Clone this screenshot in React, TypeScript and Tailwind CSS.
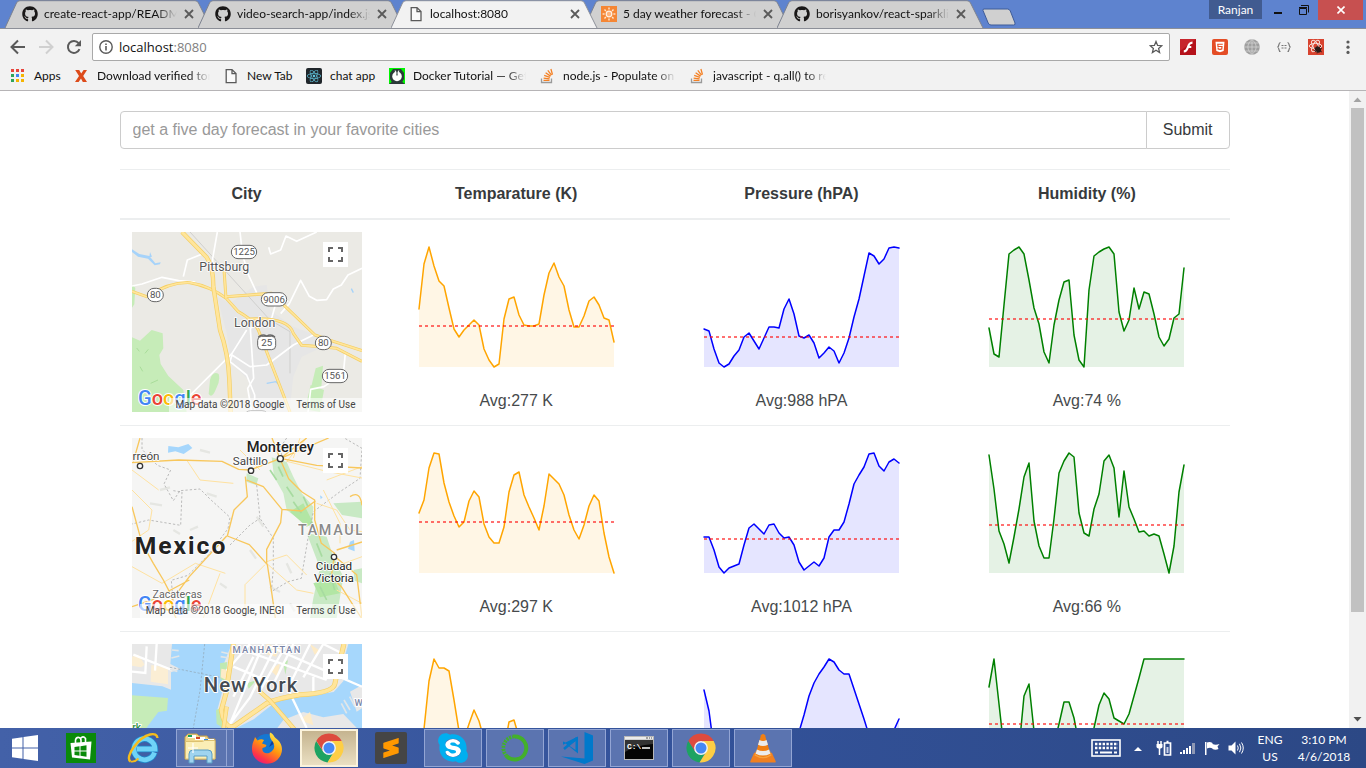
import React from "react";
import { FaGithub, FaHtml5, FaReact, FaSkype } from "react-icons/fa";
import { SiSublimetext } from "react-icons/si";

/* ---------- Browser icons ---------- */

function PageIcon() {
  return (
    <svg className="h-4 w-4" viewBox="0 0 16 16" fill="none" stroke="#5a5a5a" strokeWidth="1.3" aria-hidden="true">
      <path d="M3.2 1.6H9l4 4v9H3.2zM9 1.6v4h4" fill="#fafafa" />
    </svg>
  );
}

function SunIcon() {
  const rays = [0, 45, 90, 135, 180, 225, 270, 315];
  return (
    <svg className="h-4 w-4" viewBox="0 0 16 16" aria-hidden="true">
      <rect width="16" height="16" fill="#f58634" />
      <circle cx="8" cy="8" r="2.8" fill="#ffb27a" stroke="#fff1e2" strokeWidth="1.2" />
      {rays.map((r) => (
        <path key={r} d="M8 1.6v2" stroke="#ffe6cf" strokeWidth="1.4" transform={`rotate(${r} 8 8)`} />
      ))}
    </svg>
  );
}

function CloseIcon() {
  return (
    <svg className="h-2.5 w-2.5" viewBox="0 0 10 10" stroke="#5a5a5a" strokeWidth="1.8" aria-hidden="true">
      <path d="M1 1l8 8M9 1L1 9" />
    </svg>
  );
}

function StackIcon() {
  return (
    <svg className="h-4 w-4" viewBox="0 0 16 16" fill="none" aria-hidden="true">
      <path d="M2.5 10.5v4h10v-4" stroke="#9a9a9a" strokeWidth="1.3" />
      <g stroke="#f48024" strokeWidth="1.3">
        <path d="M4.5 12.4h6M4.6 10.1l6 .8M5.2 7.4l5.7 2M6.6 4.7l5 3.4M8.8 2.4l3.7 4.8M11.9 1l1.6 5.6" />
      </g>
    </svg>
  );
}

function DockerIcon() {
  return (
    <svg className="h-4 w-4" viewBox="0 0 16 16" aria-hidden="true">
      <rect width="16" height="16" fill="#00f500" />
      <path d="M4 1h8l3 4v6l-3 5H4l-3-5V5z" fill="#2c3a3a" />
      <circle cx="8" cy="8.4" r="4.8" fill="#fff" />
      <path d="M8 2v5.500" stroke="#2c3a3a" strokeWidth="1.2" />
      <path d="M6.200 2.500l.6 3M9.800 2.500l-.6 3" stroke="#fff" strokeWidth="1" />
      <path d="M0 16l4-3v3zM16 16l-4-3v3z" fill="#2c3a3a" />
    </svg>
  );
}

function AppsIcon() {
  const colors = ["#e8453c", "#e8453c", "#e8453c", "#2fa45b", "#4285f4", "#f5b400", "#2fa45b", "#f5b400", "#f5b400"];
  return (
    <svg className="h-4 w-4" viewBox="0 0 16 16" aria-hidden="true">
      {colors.map((c, i) => (
        <rect key={i} x={1 + (i % 3) * 5} y={1 + Math.floor(i / 3) * 5} width="3" height="3" fill={c} />
      ))}
    </svg>
  );
}

function XIcon() {
  return (
    <svg className="h-4 w-4" viewBox="0 0 16 16" aria-hidden="true">
      <path d="M2.2 2h4l2 3.4L10.6 2H14l-3.8 6L14 14h-4.2L8 10.6 5.6 14H2l4-6z" fill="#dd4b1a" />
    </svg>
  );
}

function ReactBadge() {
  return (
    <span className="flex h-4 w-4 items-center justify-center rounded-xs bg-[#20262b] text-[#61c7e0]">
      <FaReact className="h-3.5 w-3.5" aria-hidden="true" />
    </span>
  );
}

/* ---------- Browser chrome ---------- */

type TabInfo = { title: string; icon: React.ReactNode; active?: boolean };

const githubIcon = <FaGithub className="h-4 w-4 text-[#191717]" aria-hidden="true" />;

const tabs: TabInfo[] = [
  { title: "create-react-app/README", icon: githubIcon },
  { title: "video-search-app/index.js", icon: githubIcon },
  { title: "localhost:8080", icon: <PageIcon />, active: true },
  { title: "5 day weather forecast - O", icon: <SunIcon /> },
  { title: "borisyankov/react-sparkli", icon: githubIcon },
];

function Tab({ title, icon, active }: TabInfo) {
  return (
    <div className={`relative -mr-3.5 flex h-7 w-[207px] shrink-0 items-center pl-[17px] pr-[18px] ${active ? "z-10" : ""}`}>
      <svg className="absolute inset-0 h-full w-full" viewBox="0 0 207 28" preserveAspectRatio="none" aria-hidden="true">
        <path
          d="M0 28L11.5 3Q12.5 .7 15 .7H190Q192.500 .7 193.500 3L206 28"
          fill={active ? "#f2f2f2" : "#d0d0d0"}
          stroke={active ? "#8d9099" : "#7d828f"}
        />
      </svg>
      <span className="relative shrink-0">{icon}</span>
      <span className="relative ml-1.5 w-[133px] shrink-0 overflow-hidden whitespace-nowrap text-[#111] [mask-image:linear-gradient(to_right,black_84%,transparent)]">
        {title}
      </span>
      <button type="button" aria-label={`Close ${title}`} className="relative ml-[7px]">
        <CloseIcon />
      </button>
    </div>
  );
}

function TabStrip() {
  return (
    <header className="flex h-[29px] shrink-0 items-start justify-between border-b border-[#8c8f98] bg-[#5e83cf]">
      <div className="flex pl-[5px]">
        {tabs.map((t) => (
          <Tab key={t.title} {...t} />
        ))}
        <button type="button" aria-label="New tab" className="ml-3 pt-1.5">
          <svg className="h-[18px] w-[34px]" viewBox="0 0 34 18" aria-hidden="true">
            <path d="M2 1h23.500q2 0 2.800 2l4.700 12q.6 2-1.500 2H9q-2 0-2.800-2L1 2.500Q.7 1 2 1z" fill="#d0d0d0" stroke="#3f5c98" />
          </svg>
        </button>
      </div>
      <div className="flex items-start pr-[3px]">
        <button type="button" className="mr-2 h-[19px] w-[53px] bg-[#415b90] leading-4 text-white">Ranjan</button>
        <button type="button" aria-label="Minimize" className="flex h-5 w-6 items-center pl-1">
          <svg className="h-3 w-2" viewBox="0 0 8 12" aria-hidden="true"><path d="M0 9h8" stroke="#111" strokeWidth="2" /></svg>
        </button>
        <button type="button" aria-label="Restore" className="flex h-5 w-6 items-center pl-1">
          <svg className="h-3 w-3" viewBox="0 0 12 12" fill="none" stroke="#111" aria-hidden="true">
            <path d="M1.500 4.500h7v6h-7zM1 3.500h8M3 1.500h7.500v7" />
          </svg>
        </button>
        <button type="button" aria-label="Close" className="flex h-5 w-[45px] items-center justify-center bg-[#c75050]">
          <svg className="h-2 w-2" viewBox="0 0 8 8" stroke="#fff" strokeWidth="1.6" aria-hidden="true"><path d="M.500 .500l7 7M7.500 .500l-7 7" /></svg>
        </button>
      </div>
    </header>
  );
}

function Toolbar() {
  return (
    <div className="flex h-[35px] shrink-0 items-center bg-[#f2f2f2] px-2.5 pt-1">
      <div className="-mt-1 flex items-center gap-3">
        <button type="button" aria-label="Back">
          <svg className="h-4 w-4" viewBox="0 0 16 16" fill="none" stroke="#5a5a5a" strokeWidth="2" aria-hidden="true"><path d="M15 8H2M8 1.500L1.500 8 8 14.500" /></svg>
        </button>
        <button type="button" aria-label="Forward">
          <svg className="h-4 w-4" viewBox="0 0 16 16" fill="none" stroke="#d0d0d0" strokeWidth="2" aria-hidden="true"><path d="M1 8h13M8 1.500L14.500 8 8 14.500" /></svg>
        </button>
        <button type="button" aria-label="Reload">
          <svg className="h-4 w-4" viewBox="0 0 16 16" fill="none" aria-hidden="true">
            <path d="M13.500 10.200A6 6 0 1 1 12.600 4.100" stroke="#5a5a5a" strokeWidth="2" />
            <path d="M15 1v6.200H8.800z" fill="#5a5a5a" />
          </svg>
        </button>
      </div>
      <div className="-mt-1 ml-2.5 flex h-7 min-w-0 flex-1 items-center rounded-xs border border-[#a9a9a9] bg-white px-1.5">
        <svg className="h-3.5 w-3.5" viewBox="0 0 14 14" fill="none" stroke="#5a5a5a" aria-hidden="true">
          <circle cx="7" cy="7" r="6.200" strokeWidth="1.400" />
          <path d="M7 6v4.500M7 3.400v1.500" strokeWidth="1.600" />
        </svg>
        <div className="ml-1.5 min-w-0 flex-1 font-['Open_Sans',sans-serif] text-[13px] leading-5 text-[#111]">
          localhost<span className="text-[#808080]">:8080</span>
        </div>
        <button type="button" aria-label="Bookmark this page">
          <svg className="h-3.5 w-3.5" viewBox="0 0 14 14" fill="none" stroke="#5a5a5a" strokeWidth="1.300" aria-hidden="true">
            <path d="M7 1.500l1.600 3.900 4.200.3-3.200 2.700 1 4.100L7 10.300l-3.600 2.200 1-4.100L1.200 5.700l4.200-.3z" />
          </svg>
        </button>
      </div>
      <div className="-mt-1 ml-2.5 flex items-center gap-4">
        <svg className="h-4 w-4" viewBox="0 0 16 16" role="img" aria-label="Flash">
          <rect width="16" height="16" fill="#b5121b" /><path d="M0 0h16L0 12z" fill="#d4343b" opacity=".6" />
          <path d="M12.500 2.500v2.300c-1.600 0-2.300.7-2.900 2.100h1.700V9H8.800c-1 2.700-2.300 4.500-5 4.500v-2.300c1.700 0 2.300-1.200 3.300-3.900.9-2.600 2.300-4.800 5.400-4.800z" fill="#fff" />
        </svg>
        <span className="flex h-4 w-4 items-center justify-center rounded-xs bg-[#e44d26] text-white"><FaHtml5 className="h-3 w-3" aria-hidden="true" /></span>
        <svg className="h-4 w-4" viewBox="0 0 16 16" role="img" aria-label="Globe">
          <circle cx="8" cy="8" r="7.800" fill="#9f9f9f" />
          <path d="M8 0v16M0 8h16M1.500 4h13M1.500 12h13M8 .5C2.500 5 2.500 11 8 15.500M8 .5c5.500 4.500 5.500 10.500 0 15" fill="none" stroke="#d2d2d2" strokeWidth=".8" />
        </svg>
        <svg className="h-4 w-4" viewBox="0 0 16 16" fill="none" stroke="#777" role="img" aria-label="JSON">
          <path d="M4.500 3.500C2 3.500 3.800 7.500 1.500 8c2.300.5.5 4.500 3 4.500M11.500 3.500c2.500 0 .7 4 3 4.500-2.300.5-.5 4.500-3 4.500" strokeWidth="1.200" />
          <path d="M5.500 6.500h2M8.500 6.500h2M5.500 9h2M8.500 9h2" strokeWidth="1.200" />
        </svg>
        <svg className="h-4 w-4" viewBox="0 0 16 16" fill="none" role="img" aria-label="React">
          <rect width="16" height="16" fill="#d8432f" />
          <g stroke="#f7dcd6" strokeWidth="1"><ellipse cx="7.500" cy="7" rx="6.300" ry="2.600" /><ellipse cx="7.500" cy="7" rx="6.300" ry="2.600" transform="rotate(60 7.500 7)" /><ellipse cx="7.500" cy="7" rx="6.300" ry="2.600" transform="rotate(120 7.500 7)" /></g>
          <ellipse cx="10" cy="10.500" rx="2.600" ry="3.400" fill="#2b1a18" transform="rotate(-40 10 10.500)" />
          <path d="M6 9l8 4M7 13l6-6M9 14.500l1-8M6 11.500l8-2" stroke="#2b1a18" strokeWidth=".8" />
        </svg>
        <button type="button" aria-label="Menu">
          <svg className="h-4 w-4" viewBox="0 0 16 16" fill="#5a5a5a" aria-hidden="true"><circle cx="8" cy="3" r="1.600" /><circle cx="8" cy="8.200" r="1.600" /><circle cx="8" cy="13.400" r="1.600" /></svg>
        </button>
      </div>
    </div>
  );
}

const FADE = "w-[113px] overflow-hidden [mask-image:linear-gradient(to_right,black_82%,transparent)]";

const bookmarks = [
  { label: "Apps", icon: <AppsIcon />, width: "w-[26px]" },
  { label: "Download verified torr", icon: <XIcon />, width: FADE },
  { label: "New Tab", icon: <PageIcon />, width: "w-[46px]" },
  { label: "chat app", icon: <ReactBadge />, width: "w-[46px]" },
  { label: "Docker Tutorial — Get", icon: <DockerIcon />, width: FADE },
  { label: "node.js - Populate on", icon: <StackIcon />, width: FADE },
  { label: "javascript - q.all() to re", icon: <StackIcon />, width: FADE },
];

function BookmarksBar() {
  return (
    <nav aria-label="Bookmarks" className="flex h-[27px] shrink-0 items-start gap-[13px] border-b border-[#b6b4b6] bg-[#f2f2f2] pl-2.5 pt-1">
      {bookmarks.map((b) => (
        <a key={b.label} href="#" className="flex items-center gap-2 text-[#111]">
          {b.icon}
          <span className={`whitespace-nowrap leading-4 ${b.width}`}>{b.label}</span>
        </a>
      ))}
    </nav>
  );
}

/* ---------- Maps ---------- */

type Shield = { x: number; y: number; w: number; text: string };

function Road({ d, width = 9 }: { d: string; width?: number }) {
  return (
    <g fill="none" strokeLinejoin="round">
      <path d={d} stroke="#f5cf62" strokeWidth={width} />
      <path d={d} stroke="#ffe59b" strokeWidth={width - 4} />
    </g>
  );
}

const shields: Shield[] = [
  { x: 372, y: 96, w: 76, text: "1225" },
  { x: 106, y: 225, w: 48, text: "80" },
  { x: 462, y: 238, w: 76, text: "9006" },
  { x: 440, y: 369, w: 54, text: "25" },
  { x: 610, y: 369, w: 48, text: "80" },
  { x: 645, y: 468, w: 76, text: "1561" },
];

function LondonMap() {
  return (
    <svg className="block h-full w-full" viewBox="36 36 690 540" preserveAspectRatio="xMidYMid slice" role="img" aria-label="Map of London, Kentucky">
      <rect x="36" y="36" width="690" height="540" fill="#ebeae5" />
      <path d="M292 230L330 250 400 200 440 195 450 270 520 320 600 350 610 380 545 410 520 470 508 576H400L385 480 335 430 320 340z" fill="#e6e6e6" />
      <path d="M36 352L60 362 95 330 128 340 130 385 118 405 122 432 145 468 190 510 200 576H36zM36 195l10 8-3 50-7 10z" fill="#c6ecb8" />
      <path d="M270 480q8-28 26-18 6 20-8 45-12 30-22 15zM575 495l12-50 22-8-5 65-25 10zM572 495l40 15-12 66-45-8z" fill="#c6ecb8" />
      <path d="M75 400l10-12M92 490l22-10M60 440l8 14M160 545l20-8M50 384l8 10M110 520l14 8" fill="none" stroke="#a9dd9a" strokeWidth="3" />
      <path d="M36 88L58 102 88 108 106 130 122 127 120 133 104 136 84 116 54 110 36 96zM90 96l6 14-8 2z" fill="#a6d3fa" />
      <path d="M440 490l28-5 10 10M694 206l6 12" fill="none" stroke="#a6d3fa" strokeWidth="4" />
      <path d="M210 36L450 300 510 335V460" fill="none" stroke="#cfcfcd" strokeWidth="3" />
      <g fill="none" stroke="#fff" strokeWidth="5" strokeLinejoin="round">
        <path d="M36 198l30-6 60-20 50 10 50 4M190 170l12-50 45-18" />
        <path d="M292 36l-14 80 4 120" />
        <path d="M360 36l8 70 18 60 24 52M590 36l-60 28-32-16-16 42-30 12-6-20" />
        <path d="M726 145l-42 20-20 30-24 12-20 32-30 2-22-12-26-48-34 70-26 30" />
        <path d="M455 295l10-36 40-16M455 295l-64 30 4 60 6 90-18 30 12 71M380 330l-44 70-60 60-80 80" />
        <path d="M580 345l-60 30-80 60-50 5-54-35-6 20 50 40 24 60 0 50" />
        <path d="M676 400l-6 60-58 40-40 8-8 68" />
      </g>
      <Road d="M36 214L80 230Q150 185 210 188Q270 198 320 236L355 275Q400 300 415 330L440 395 510 576" />
      <Road d="M318 236L312 148M318 230L455 220 585 345 640 364 726 392" />
      <Road d="M390 297Q505 290 520 340L545 376Q610 380 650 385L726 424" />
      <Road d="M186 36L260 112Q280 140 280 200L300 330Q325 400 328 480L332 576" width={13} />
      <g fontFamily="Roboto, sans-serif" textAnchor="middle" fill="#555">
        <g fontSize="37" stroke="#fff" strokeWidth="5" strokeLinejoin="round" paintOrder="stroke">
          <text x="313" y="154">Pittsburg</text>
          <text x="404" y="321">London</text>
        </g>
        {shields.map((s) => (
          <g key={`${s.text}-${s.x}`} fontSize="29">
            <rect x={s.x - s.w / 2} y={s.y - 20} width={s.w} height="40" rx={s.text === "25" ? 12 : 20} fill="#fff" stroke="#666" strokeWidth="3" />
            <text x={s.x} y={s.y + 10}>{s.text}</text>
          </g>
        ))}
        <path d="M415 351q12-10 25-3 13-7 25 3" fill="none" stroke="#666" strokeWidth="4" />
        <rect x="372" y="572" width="74" height="40" rx="20" fill="#fff" stroke="#666" strokeWidth="3" />
      </g>
    </svg>
  );
}

function MexicoMap() {
  return (
    <svg className="block h-full w-full" viewBox="36 24 690 540" preserveAspectRatio="xMidYMid slice" role="img" aria-label="Map of northern Mexico">
      <rect x="36" y="24" width="690" height="540" fill="#f5f5f4" />
      <path d="M455 82L500 96 520 140 545 190 580 230 575 290 540 270 500 240 490 190 462 140z" fill="#cdebc8" />
      <path d="M560 310l60 10 20 60 30 60-20 124h-80l10-60 20-90zM640 220l86-5v50l-60-10zM700 420l26-5v45l-22-8zM380 130l35 15-6 20-30-10zM480 100l30 25-15 15-22-20z" fill="#c8e9c4" />
      <path d="M510 245l40-25 30 60-20 10zM580 460l60-20 20 50-60 12z" fill="#b2e6a4" />
      <path d="M475 110l14 30M500 170l20 30M520 215l24 34M590 340l16 40M600 470l20 40M630 430l14 50M470 150l-20-30M550 200l14 30" fill="none" stroke="#a7dba0" strokeWidth="5" />
      <path d="M120 180l30-8M90 220l36 6M210 300l24-10M260 190l30 10M300 460l20 14M410 260l20 30M450 470l30 16M500 400l14 30M240 60l30 8M160 300l20 12M390 360l18 26M510 520l14 24" fill="none" stroke="#e5e6e2" strokeWidth="7" />
      <path d="M145 48l30 4 30-10 12 12-26 18-25-8-22 4zM690 335l12-5 2 34-20-8zM600 196l8 6-6 6z" fill="#a5d6fc" />
      <g fill="none" stroke="#9d9d9d" strokeWidth="2" strokeDasharray="7 6">
        <path d="M66 24v34l46 48 40 14-20 42 28 50 20-30 60-5 30 30 60 55-6 34-60 80-60 60-50 15 6 70" />
        <path d="M160 182l26 4-4 100-96-16-50 12M410 165l10 100 40 60v90l-6 70 50-30 40-10 20-120 16-80 80-60 60-40 6-90-60-35" />
        <path d="M500 24l-20 30 10 40M330 345l60-60 30-20" />
      </g>
      <g fill="none" stroke="#ffe2a0" strokeWidth="3">
        <path d="M36 180l60 60-10 60-50 34M200 90l40 60 100 10M36 410l90 50 100-60 90 30M375 564v-100l60-60M440 395l60-20 60 60M540 24l-20 60M560 24l-60 70 120 30 106 20M590 220l60 20 40 60 36 5M660 340v-60l-50-100M645 410l81-30M440 400l90 80 50 10M650 480l76 40M36 120l80 60M420 120l-60-60M620 150l106-40M300 430l-50 134" />
      </g>
      <g fill="none" stroke="#f8c75c" strokeWidth="4" strokeLinejoin="round">
        <path d="M36 98l140-8 130 4 50 24 34 2 90-34 26 60 40 40 38 24v60l20 70 40 30-10 70 30 30 60 94" />
        <path d="M480 86l80-62M480 86l146-62M485 86l105 20 136 8M480 86l-24-62" />
        <path d="M376 140l6 60-40 40-20 78 66 26 54 60 14 90 10 70M380 150l50 20 56 68-4 40-42 80v44M485 238l60 5 41-30" />
        <path d="M320 318L208 440l-60 80 20 44M36 230l30 110 34 60 30 50 26 50M36 530l60-20 112-60M650 360l76-24M650 384l60 50 16 130M690 200q30-20 36 26M60 24l-20 70" />
      </g>
      <g fontFamily="Roboto, sans-serif" textAnchor="middle" stroke="#fff" strokeWidth="5" strokeLinejoin="round" paintOrder="stroke" fill="#222">
        <g fill="#fff" stroke="#333" strokeWidth="4" paintOrder="normal">
          <circle cx="60" cy="108" r="8" /><circle cx="393" cy="122" r="8" /><circle cx="481" cy="86" r="9" /><circle cx="642" cy="381" r="8" />
        </g>
        <text x="481" y="67" fontSize="44" fontWeight="500">Monterrey</text>
        <text x="391" y="104" fontSize="35" fill="#444">Saltillo</text>
        <text x="78" y="89" fontSize="35" fill="#444">rreón</text>
        <text x="183" y="373" fontSize="74" fontWeight="700" letterSpacing="6">Mexico</text>
        <text x="634" y="315" fontSize="43" fontWeight="500" fill="#8a8a8a" letterSpacing="5">TAMAUL</text>
        <text x="642" y="419" fontSize="35">Ciudad</text>
        <text x="642" y="455" fontSize="35">Victoria</text>
        <text x="172" y="504" fontSize="32" fill="#666">Zacatecas</text>
      </g>
    </svg>
  );
}

function NewYorkMap() {
  return (
    <svg className="block h-full w-full" viewBox="36 42 690 540" preserveAspectRatio="xMidYMid slice" role="img" aria-label="Map of New York">
      <rect x="36" y="42" width="690" height="540" fill="#a6d7fc" />
      <path d="M36 42h120l-5 60 30 15-28 10v52l-26-10-91-10z" fill="#e8e8e8" />
      <path d="M94 105l50 8v50l-52-8zM36 80l20-6 18 30-10 8-28-5z" fill="#fbeed4" />
      <path d="M36 196l108 8-3 38-26 4-36 48H36z" fill="#c6ecb8" />
      <path d="M335 42h350l-20 70 6 40-30 34-170 26-70 56-60 30-40-10-10-44 16-60-2-66z" fill="#e8e8e8" />
      <path d="M300 100l22-4-6 60-15-10zM288 240l18-8v60l-16-10zM380 160l30-10-24 26zM490 100l14-10-8 44z" fill="#bfe9b2" />
      <path d="M460 310l30-40 60-24 60 16 60-10 56 58v280H420zM690 185l36-20v70l-16 10z" fill="#e8e8e8" />
      <path d="M304 116l22 4-8 30-16-8zM440 42l40 8-12 30-38-10zM450 120l30-20-8 40zM570 42l30 20-16 12zM540 270l30-24 10 40z" fill="#fdebc7" />
      <g fill="none" stroke="#fff" strokeWidth="7">
        <path d="M40 74l116 46M36 125l40 4 4-80M110 42l-5 80M430 42l-100 240M470 42l-80 160-60 80M500 42l-80 140M390 42l-70 80M340 110l120 50M370 60l250 90M520 42l-60 120M570 42l-60 120M610 42l-60 100M450 50l276 120M400 80l-60 120M510 190l50 104M580 140v50M610 42l60 30" />
      </g>
      <path d="M254 42l-14 140-20 112M150 112l150 30" fill="none" stroke="#91a4b2" strokeWidth="2" strokeDasharray="7 5" />
      <g fill="none" stroke="#e1e6e8" strokeWidth="5"><path d="M154 84l24-6M150 118l22 6M156 60l20 2M304 66l26 6M302 80l26 4M680 250l-16-30M690 240l-18-30M705 230l-16-30" /></g>
      <Road d="M340 42L318 190 304 240Q312 294 340 290L440 220Q470 205 540 194Q640 190 645 160Q655 110 672 42" width={15} />
      <Road d="M414 180L450 212 520 294 560 340" width={13} />
      <Road d="M320 230l-10 70" width={13} />
      <g fontFamily="Roboto, sans-serif" textAnchor="middle" stroke="#fff" strokeWidth="6" strokeLinejoin="round" paintOrder="stroke">
        <text x="441" y="69" fontSize="28" fontWeight="500" fill="#7a86a8" letterSpacing="4">MANHATTAN</text>
        <text x="393" y="185" fontSize="61" fontWeight="500" fill="#444b52" letterSpacing="3">New York</text>
        <text x="716" y="227" fontSize="28" fontWeight="500" fill="#7a86a8">W</text>
        <text x="50" y="302" fontSize="30" fontWeight="500" fill="#2f8f45">rk</text>
      </g>
    </svg>
  );
}

function GoogleMark() {
  return (
    <svg className="absolute bottom-0 left-1.5 h-6 w-[66px]" viewBox="0 0 66 24" role="img" aria-label="Google">
      <text x="0" y="17" fontFamily="Roboto, sans-serif" fontSize="20" fontWeight="500" stroke="#fff" strokeWidth="2" strokeLinejoin="round" paintOrder="stroke">
        <tspan fill="#4285f4">G</tspan><tspan fill="#ea4335">o</tspan><tspan fill="#fbbc05">o</tspan><tspan fill="#4285f4">g</tspan><tspan fill="#34a853">l</tspan><tspan fill="#ea4335">e</tspan>
      </text>
    </svg>
  );
}

function MapPanel({ children, credit }: { children: React.ReactNode; credit: string }) {
  return (
    <div className="relative h-[180px] w-full overflow-hidden">
      {children}
      <GoogleMark />
      <div className="absolute bottom-0 right-0 flex gap-3 bg-white/60 px-1.5 font-[Roboto,sans-serif] text-[10px] leading-[14px] text-[#444]">
        <span>{credit}</span>
        <a href="#">Terms of Use</a>
      </div>
      <button type="button" aria-label="Toggle fullscreen view" className="absolute right-3.5 top-2.5 flex h-[25px] w-[25px] items-center justify-center bg-white">
        <svg className="h-[15px] w-[15px]" viewBox="0 0 15 15" fill="none" stroke="#666" strokeWidth="2" aria-hidden="true">
          <path d="M1 5V1h4M10 1h4v4M14 10v4h-4M5 14H1v-4" />
        </svg>
      </button>
    </div>
  );
}

/* ---------- Forecast table ---------- */

type Series = { points: number[]; mean: number; avg: string };

type City = { name: string; credit: string; map: React.ReactNode; series: Series[] };

const COLORS = ["orange", "blue", "green"];

/* Points are distances from the top of the 120px plot, one every 5px. */
const cities: City[] = [
  {
    name: "London",
    credit: "Map data ©2018 Google",
    map: <LondonMap />,
    series: [
      { avg: "277 K", mean: 79, points: [62, 17, 0, 19, 34, 39, 61, 82, 90, 83, 78, 73, 78, 102, 113, 120, 117, 72, 52, 50, 68, 78, 79, 79, 77, 48, 26, 16, 30, 39, 63, 80, 80, 69, 54, 50, 58, 71, 73, 95] },
      { avg: "988 hPA", mean: 90, points: [82, 84, 102, 116, 120, 117, 109, 103, 90, 86, 94, 102, 91, 80, 80, 81, 62, 52, 67, 89, 91, 88, 96, 111, 106, 100, 104, 116, 106, 91, 70, 52, 29, 6, 9, 17, 12, 1, 0, 1] },
      { avg: "74 %", mean: 72, points: [81, 107, 110, 58, 7, 3, 0, 7, 33, 61, 77, 105, 116, 78, 53, 35, 33, 88, 113, 120, 43, 9, 5, 2, 0, 7, 65, 84, 73, 41, 62, 45, 47, 67, 90, 99, 92, 71, 67, 21] },
    ],
  },
  {
    name: "Mexico",
    credit: "Map data ©2018 Google, INEGI",
    map: <MexicoMap />,
    series: [
      { avg: "297 K", mean: 69, points: [60, 47, 15, 0, 1, 30, 49, 63, 74, 69, 48, 38, 44, 71, 84, 90, 90, 74, 39, 22, 19, 42, 54, 65, 77, 53, 21, 26, 31, 42, 62, 77, 86, 72, 53, 42, 48, 80, 104, 120] },
      { avg: "1012 hPA", mean: 86, points: [84, 84, 97, 114, 120, 115, 113, 111, 92, 75, 71, 76, 81, 72, 71, 80, 85, 84, 92, 109, 117, 113, 109, 113, 105, 84, 77, 77, 69, 51, 31, 22, 14, 1, 0, 13, 18, 9, 6, 10] },
      { avg: "66 %", mean: 72, points: [2, 36, 78, 91, 110, 84, 56, 24, 10, 68, 93, 105, 105, 66, 20, 8, 0, 4, 60, 80, 83, 56, 41, 8, 2, 15, 64, 18, 54, 66, 79, 78, 83, 81, 83, 101, 120, 93, 39, 12] },
    ],
  },
  {
    name: "New York",
    credit: "Map data ©2018 Google",
    map: <NewYorkMap />,
    series: [
      { avg: "278 K", mean: 76, points: [110, 70, 22, 0, 9, 9, 12, 41, 72, 80, 65, 51, 62, 80, 95, 105, 110, 90, 63, 61, 78, 90, 100, 108, 112, 108, 98, 90, 86, 92, 104, 112, 118, 120, 108, 96, 90, 94, 104, 112] },
      { avg: "1018 hPA", mean: 80, points: [31, 52, 90, 105, 115, 120, 118, 112, 110, 108, 105, 104, 108, 110, 108, 105, 100, 92, 84, 73, 56, 37, 24, 15, 8, 0, 3, 11, 15, 15, 30, 45, 60, 76, 88, 95, 92, 82, 71, 60] },
      { avg: "79 %", mean: 65, points: [28, 0, 45, 90, 110, 115, 90, 37, 25, 72, 95, 110, 105, 85, 65, 43, 43, 59, 85, 100, 95, 69, 46, 34, 40, 59, 62, 65, 55, 37, 19, 0, 0, 0, 0, 0, 0, 0, 0, 0] },
    ],
  },
];

function Sparkline({ points, mean, color }: { points: number[]; mean: number; color: string }) {
  const line = points.map((y, i) => `${i * 5},${y}`).join(" ");
  return (
    <svg className="mx-auto block h-[157px] w-[199px]" viewBox="-2 -15 199 157" aria-hidden="true">
      <polygon points={`0,120 ${line} 195,120`} fill={color} fillOpacity=".1" />
      <polyline points={line} fill="none" stroke={color} strokeWidth="1.5" strokeLinejoin="round" strokeLinecap="round" />
      <path d={`M0 ${mean}h195`} stroke="red" strokeOpacity=".75" strokeWidth="1.5" strokeDasharray="3 3" />
    </svg>
  );
}

function ForecastTable() {
  return (
    <table className="mt-5 w-full table-fixed border-separate border-spacing-0 text-center">
      <thead>
        <tr>
          {["City", "Temparature (K)", "Pressure (hPA)", "Humidity (%)"].map((h) => (
            <th key={h} scope="col" className="border-b-2 border-t border-[#eceeef] p-3 font-bold first:w-[254px]">{h}</th>
          ))}
        </tr>
      </thead>
      <tbody>
        {cities.map((city, row) => {
          const border = row > 0 ? "border-t border-[#eceeef]" : "";
          return (
            <tr key={city.name}>
              <td className={`p-3 align-top ${border}`}>
                <MapPanel credit={city.credit}>{city.map}</MapPanel>
              </td>
              {city.series.map((s, i) => (
                <td key={s.avg} className={`p-3 align-top text-[#464a4c] ${border}`}>
                  <Sparkline points={s.points} mean={s.mean} color={COLORS[i]} />
                  <div>Avg:{s.avg}</div>
                </td>
              ))}
            </tr>
          );
        })}
      </tbody>
    </table>
  );
}

function Page() {
  return (
    <main className="min-w-0 flex-1 overflow-hidden bg-white font-['Liberation_Sans',Arial,sans-serif] text-base leading-6 text-[#373a3c]">
      <div className="mx-auto max-w-[1140px] px-[15px] pt-5">
        <form className="flex h-[38px]" onSubmit={(e) => e.preventDefault()}>
          <input
            type="text"
            aria-label="City"
            placeholder="get a five day forecast in your favorite cities"
            className="min-w-0 flex-1 rounded-l border border-[#ccc] px-3 outline-none placeholder:text-[#999]"
          />
          <button type="submit" className="-ml-px rounded-r border border-[#ccc] bg-white px-4">Submit</button>
        </form>
        <ForecastTable />
      </div>
    </main>
  );
}

function ScrollRail() {
  return (
    <div className="flex w-[17px] shrink-0 flex-col items-center justify-between bg-[#f1f1f1]" aria-hidden="true">
      <svg className="h-[17px] w-[17px]" viewBox="0 0 17 17"><path d="M4.500 11h8l-4-4.500z" fill="#a3a3a3" /></svg>
      <div className="w-[13px] flex-1"><div className="h-[83.500%] bg-[#c1c1c1]" /></div>
      <svg className="h-[17px] w-[17px]" viewBox="0 0 17 17"><path d="M4.500 6h8l-4 4.500z" fill="#505050" /></svg>
    </div>
  );
}

/* ---------- Taskbar ---------- */

function ChromeIcon() {
  return (
    <svg className="h-[30px] w-[30px]" viewBox="0 0 30 30" aria-hidden="true">
      <path d="M15 15L2.400 7.800A14.500 14.500 0 0 1 27.600 7.800z" fill="#dd4b3e" />
      <path d="M2.200 8A14.500 14.500 0 0 0 13.500 29.400L20.500 18 9.500 19z" fill="#1da362" />
      <path d="M27.700 8A14.500 14.500 0 0 1 13.500 29.400L21 17.500 17 8z" fill="#fdce45" />
      <path d="M2.400 7.800L9.200 18.500 15 8z" fill="#dd4b3e" />
      <circle cx="15" cy="15" r="6.900" fill="#f4f4f4" />
      <circle cx="15" cy="15" r="5.500" fill="#4688f4" />
    </svg>
  );
}

function StoreIcon() {
  return (
    <svg className="h-[30px] w-[30px]" viewBox="0 0 30 30" aria-hidden="true">
      <rect width="30" height="30" fill="#0a8a0a" />
      <path d="M4.500 10l21-1.500-1.500 18-18-2z" fill="#fff" />
      <path d="M9.500 12V7q.8-3 3.500-2.500 2 .5 2 3V11M14 6q3-4 5.500-.5V11" fill="none" stroke="#fff" strokeWidth="1.600" />
      <path d="M8.500 14l5-.7v4.200h-5zM14.500 13.200l6-.9v5.200h-6zM8.500 18.500h5v4.200l-5-.7zM14.500 18.500h6v5.200l-6-.9z" fill="#0a8a0a" />
    </svg>
  );
}

function ExplorerBrowserIcon() {
  return (
    <svg className="h-8 w-8" viewBox="0 0 32 32" fill="none" aria-hidden="true">
      <path d="M27.500 20.500A10.500 10.500 0 1 1 28 17H10" stroke="#1f86c8" strokeWidth="6.400" />
      <path d="M27.500 20.500A10.500 10.500 0 1 1 28 17H10" stroke="#6fd3f7" strokeWidth="4.800" />
      <path d="M3.500 29.500C-3 25 12 5 23 2.500q7-1.500 7.500 3.500" stroke="#f5bc1c" strokeWidth="2.400" />
      <path d="M3.500 29.500q4 1 8-3" stroke="#f5bc1c" strokeWidth="1.800" />
    </svg>
  );
}

function FilesIcon() {
  return (
    <svg className="h-8 w-8" viewBox="0 0 32 32" aria-hidden="true">
      <path d="M1 5l3-3h9l2 2h8l2 3h6v20H1z" fill="#f0d78a" stroke="#c5a150" />
      <path d="M4 3h8v3H4z" fill="#fff" /><path d="M4 3h4v2H4z" fill="#17a35c" />
      <path d="M11 5h10v3H11z" fill="#fff" /><path d="M12 5h4v2h-4z" fill="#d24726" />
      <path d="M19 7h11v3H19z" fill="#fff" /><path d="M20 7h4v2h-4z" fill="#2f8de4" />
      <path d="M1.500 9.500h17l2-1h10.500V27H1.500z" fill="#fbeeb5" stroke="#dcc070" />
      <path d="M5 31V22q0-4 4-4h15q4 0 4 4v9h-5v-7H10v7z" fill="#9fd4ef" stroke="#5a9dc4" />
      <path d="M9 11v10M4 16h10" stroke="#fff" strokeWidth="1.200" />
    </svg>
  );
}

function FirefoxIcon() {
  return (
    <svg className="h-8 w-8" viewBox="0 0 32 32" aria-hidden="true">
      <defs>
        <linearGradient id="fox" x1="0.8" y1="0" x2="0.2" y2="1">
          <stop offset="0" stopColor="#fff14f" /><stop offset=".45" stopColor="#ff980e" /><stop offset=".8" stopColor="#ff3647" /><stop offset="1" stopColor="#e31587" />
        </linearGradient>
      </defs>
      <circle cx="15.500" cy="14.500" r="12.500" fill="#1577d2" />
      <path d="M20 3q5 3 4 8l-6 4 4-8z" fill="#123f9c" />
      <path d="M19 .5c3 1 4 4 5.500 5.500C29 9 31 13 31 17.500A15 14.500 0 0 1 1 17C1 11 3 9 4 5l2.500 3.500Q10 6.500 13 8l-2 3.500 4.500 1.500-1 2-3 1c-1 5 4 6.500 7.500 4.500 4-2 5.500-6 3-10.500C20 7.500 18 5 19 .5z" fill="url(#fox)" />
    </svg>
  );
}

function SublimeIcon() {
  return (
    <span className="flex h-8 w-8 items-center justify-center rounded-xs bg-[#454545] text-[#ff9800]">
      <SiSublimetext className="h-5 w-5" aria-hidden="true" />
    </span>
  );
}

function SkypeIcon() {
  return (
    <span className="relative flex h-[30px] w-[30px] items-center justify-center">
      <span className="absolute inset-1.5 rounded-full bg-white" />
      <FaSkype className="relative h-[34px] w-[34px] shrink-0 text-[#00aff0]" aria-hidden="true" />
    </span>
  );
}

function AnacondaIcon() {
  return (
    <svg className="h-7 w-7" viewBox="0 0 28 28" fill="none" stroke="#43b02a" aria-hidden="true">
      <path d="M13 2.500A11.500 11.500 0 1 1 5.500 22" strokeWidth="4" />
      <path d="M13 2.500A11.500 11.500 0 0 0 5.500 22" strokeWidth="4" strokeDasharray="2 1" />
      <path d="M12 .8A13.400 13.400 0 0 0 3.500 23" strokeWidth="1" stroke="#5b74b0" strokeDasharray="1.500 2" />
      <path d="M13.500 4.500A9.500 9.500 0 0 0 7 20" strokeWidth="1" stroke="#5b74b0" strokeDasharray="1 2.500" />
    </svg>
  );
}

function CodeIcon() {
  return (
    <svg className="h-8 w-8" viewBox="0 0 32 32" aria-hidden="true">
      <path d="M23.500 0L32 3.500v25L23.500 32 0 24.500l23.500 2z" fill="#0179cb" />
      <path d="M17 4.500v17L4.500 11.500 2 12.700V9.500l2.500 1zM14.500 9L8 13.500l6.500 4.500z" fill="#0179cb" fillRule="evenodd" />
      <path d="M3 17L16 6" stroke="#0179cb" strokeWidth="2.600" />
    </svg>
  );
}

function TerminalIcon() {
  return (
    <svg className="h-6 w-[30px]" viewBox="0 0 30 24" aria-hidden="true">
      <rect width="30" height="24" fill="#b8b8b8" />
      <path d="M1 1h28v2.500H1z" fill="#ececec" />
      <path d="M22 2h2M25 2h1M27 2h1" stroke="#555" />
      <path d="M1 4h28v19H1z" fill="#050505" />
      <path d="M1 4h28v4Q12 9 1 16z" fill="#333" />
      <text x="3" y="13" fontFamily="Liberation Mono, monospace" fontSize="8" fontWeight="bold" fill="#fff">C:\</text>
      <path d="M18 12h8" stroke="#fff" strokeWidth="1.500" />
    </svg>
  );
}

function VlcIcon() {
  return (
    <svg className="h-[30px] w-[30px]" viewBox="0 0 32 32" aria-hidden="true">
      <path d="M6.500 21h19l4 9q.4 1.500-1 1.500h-25q-1.400 0-1-1.500z" fill="#f08020" />
      <path d="M7 24q9 6 18 0l-1.500-5h-15z" fill="#f9a13c" />
      <path d="M13.800 2.500q2.200-3 4.400 0L24 23q-8 5-16 0z" fill="#f07f13" />
      <path d="M12.200 7.500q3.800 2 7.600 0l1.500 5q-5.300 2.600-10.600 0zM9.500 17.500q6.500 3.200 13 0l1.300 4.500q-7.800 4-15.600 0z" fill="#ececec" />
    </svg>
  );
}

type Look = "plain" | "running" | "active";

const LOOKS: Record<Look, string> = {
  plain: "",
  running: "border border-[#93a5d4] bg-[#5b74b0]",
  active: "border-2 border-[#fbf3dc] bg-linear-to-b from-[#c5b48f] to-[#eadfc2]",
};

const apps: { name: string; look: Look; icon: React.ReactNode }[] = [
  { name: "Store", look: "plain", icon: <StoreIcon /> },
  { name: "Internet Explorer", look: "plain", icon: <ExplorerBrowserIcon /> },
  { name: "File Explorer", look: "running", icon: <FilesIcon /> },
  { name: "Firefox", look: "plain", icon: <FirefoxIcon /> },
  { name: "Chrome", look: "active", icon: <ChromeIcon /> },
  { name: "Sublime Text", look: "plain", icon: <SublimeIcon /> },
  { name: "Skype", look: "running", icon: <SkypeIcon /> },
  { name: "Anaconda", look: "running", icon: <AnacondaIcon /> },
  { name: "Visual Studio Code", look: "running", icon: <CodeIcon /> },
  { name: "Command Prompt", look: "running", icon: <TerminalIcon /> },
  { name: "Chrome window", look: "running", icon: <ChromeIcon /> },
  { name: "VLC", look: "running", icon: <VlcIcon /> },
];

function Tray() {
  return (
    <div className="flex items-center pr-3 text-white">
      <svg className="h-[18px] w-[30px]" viewBox="0 0 30 18" fill="none" stroke="#fff" role="img" aria-label="Keyboard">
        <rect x="1" y="1" width="28" height="16" strokeWidth="1.600" />
        <path d="M4 5h23M4 9h23" strokeWidth="2.600" strokeDasharray="2.400 1.400" />
        <path d="M4 13.500h3M9 13.500h12M23 13.500h3" strokeWidth="2" />
      </svg>
      <svg className="ml-[13px] h-2 w-2" viewBox="0 0 8 8" fill="#fff" aria-hidden="true"><path d="M0 7h8L4 3z" /></svg>
      <svg className="ml-3.5 h-4 w-4" viewBox="0 0 16 16" fill="none" stroke="#fff" role="img" aria-label="Battery">
        <path d="M2 1v3M5 1v3M3.500 8v7" strokeWidth="1.500" /><path d="M.500 4h6v2.500q0 2-3 2t-3-2z" fill="#fff" stroke="none" />
        <path d="M8.500 3h6v12h-6zM10.500 1.500h2" strokeWidth="1.700" /><path d="M10.500 7h2v6h-2z" fill="#c7d0e8" stroke="none" />
      </svg>
      <svg className="ml-2 h-4 w-4" viewBox="0 0 16 16" fill="#fff" role="img" aria-label="Signal">
        <path d="M0 12h2v2H0zM3 10h2v4H3zM6 8h2v6H6zM9 6h2v8H9z" /><path d="M12 3h3v11h-3z" fill="#8e98b4" />
      </svg>
      <svg className="ml-2 h-4 w-4" viewBox="0 0 16 16" fill="#fff" role="img" aria-label="Action center">
        <path d="M1 2h1.500v13H1zM3 2.500q3-1 5.500.5v5.500Q6 7 3 8.500zM8.500 4q3 1.500 7 0l-2 2.500 1 2.500q-3 1.300-6 0z" />
      </svg>
      <svg className="ml-2 h-4 w-4" viewBox="0 0 16 16" fill="none" stroke="#fff" role="img" aria-label="Volume">
        <path d="M.500 5.500h3l4-4v13l-4-4h-3z" fill="#fff" stroke="none" /><path d="M9.500 5.500q1.500 2.500 0 5M11.500 3.800q2.700 4.200 0 8.400M13.500 2.500q3.500 5.500 0 11" />
      </svg>
      <div className="ml-2.5 w-8 text-center leading-[17px]"><div>ENG</div><div>US</div></div>
      <div className="ml-2 w-[60px] text-center leading-[17px]"><div>3:10 PM</div><div>4/6/2018</div></div>
    </div>
  );
}

function Taskbar() {
  return (
    <footer className="flex h-10 shrink-0 items-stretch justify-between bg-linear-to-r from-[#4361a8] via-[#33529a] to-[#2c4885]">
      <div className="flex">
        <button type="button" aria-label="Start" className="flex w-[50px] items-center justify-center">
          <svg className="h-[26px] w-[26px]" viewBox="0 0 26 26" fill="#fff" aria-hidden="true">
            <path d="M0 3.800L10.500 2.300V12.500H0zM11.500 2.100L26 0v12.500H11.500zM0 13.500h10.500v10.300L0 22.300zM11.500 13.500H26V26l-14.500-2.100z" />
          </svg>
        </button>
        {apps.map((a) => (
          <div key={a.name} className="flex w-[62px] px-0.5 py-px">
            <button type="button" aria-label={a.name} className={`flex flex-1 items-center justify-center ${LOOKS[a.look]}`}>
              {a.name === "File Explorer" ? (
                <span className="flex h-full items-center border-r border-[#93a5d4] pr-2.5">{a.icon}</span>
              ) : (
                a.icon
              )}
            </button>
          </div>
        ))}
      </div>
      <Tray />
    </footer>
  );
}

export default function App() {
  return (
    <div className="flex h-screen flex-col overflow-hidden font-[Lato,'Open_Sans',sans-serif] text-xs">
      <TabStrip />
      <Toolbar />
      <BookmarksBar />
      <div className="flex min-h-0 flex-1">
        <Page />
        <ScrollRail />
      </div>
      <Taskbar />
    </div>
  );
}
